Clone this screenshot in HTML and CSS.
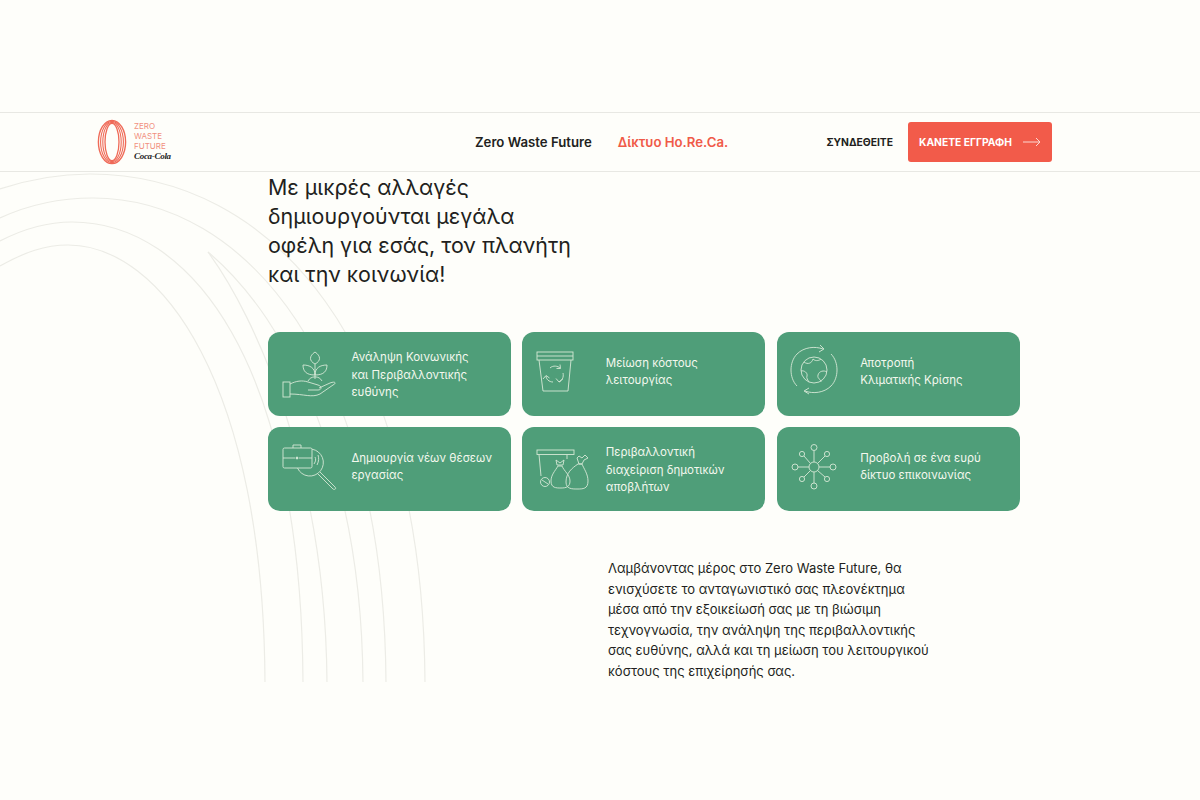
FILE: index.html
```html
<!DOCTYPE html>
<html lang="el">
<head>
  <meta charset="UTF-8">
  <title>Zero Waste Future</title>
  <link rel="stylesheet" href="styles.css">
</head>
<body>

  <header class="cabecera">
    <a class="logo" href="#">
      <svg class="logo-cero" width="30" height="46" viewBox="0 0 30 46" fill="none" stroke="#ef6a58">
        <ellipse cx="15" cy="23" rx="13.6" ry="21.6" stroke-width="1.4"/>
        <ellipse cx="15" cy="23" rx="11.4" ry="20.6" stroke-width="1.1"/>
        <ellipse cx="15" cy="23" rx="9.2" ry="19.6" stroke-width="1.1"/>
        <ellipse cx="15" cy="23" rx="7" ry="18.6" stroke-width="1.3"/>
      </svg>
      <span class="logo-texto">
        <span>ZERO</span>
        <span>WASTE</span>
        <span>FUTURE</span>
      </span>
      <span class="logo-coca">Coca-Cola</span>
    </a>

    <nav class="menu">
      <a href="#">Zero Waste Future</a>
      <a class="activo" href="#">Δίκτυο Ho.Re.Ca.</a>
    </nav>

    <a class="entrar" href="#">ΣΥΝΔΕΘΕΙΤΕ</a>
    <a class="boton" href="#">
      ΚΑΝΕΤΕ ΕΓΓΡΑΦΗ
      <svg width="18" height="10" viewBox="0 0 18 10" fill="none" stroke="#fbd9d2" stroke-width="1">
        <path d="M0 5H17M13 1l4 4-4 4"/>
      </svg>
    </a>
  </header>

  <main class="contenido">
    <!-- arcos decorativos del fondo -->
    <svg class="arcos" width="440" height="520" viewBox="0 172 440 520" fill="none" stroke="#ecece6" stroke-width="1.2">
      <path d="M0 188C30 178 60 173 90 173C270 173 425 340 425 688"/>
      <path d="M0 217C30 203 60 197 93 197C245 197 386 360 386 688"/>
      <path d="M0 240C25 227 48 221 72 221C190 221 303 360 303 688"/>
      <path d="M0 265C25 251 45 244 68 244C160 244 265 380 265 688"/>
      <path d="M208 251C290 320 363 470 363 688"/>
      <path d="M208 251C255 315 327 470 327 688"/>
    </svg>

    <h1>Με μικρές αλλαγές<br>δημιουργούνται μεγάλα<br>οφέλη για εσάς, τον πλανήτη<br>και την κοινωνία!</h1>

    <div class="tarjetas">
      <div class="tarjeta">
        <svg class="icono" viewBox="0 0 84 84">
          <rect x="15" y="50" width="7" height="15"/>
          <path d="M22 52C28 49 34 48 40 50L50 53C54 54 54 58 50 58L40 58M51 56L62 51C67 49 69 51 65 53L52 62C44 66 36 62 22 62"/>
          <path d="M47 47V32M47 32C41 29 41 24 47 20C53 24 53 29 47 32M47 43C38 43 35 39 35 33C42 33 47 36 47 43M47 43C56 43 59 39 59 33C52 33 47 36 47 43"/>
          <path d="M40 49a8 8 0 0 1 14 0"/>
        </svg>
        <p>Ανάληψη Κοινωνικής<br>και Περιβαλλοντικής<br>ευθύνης</p>
      </div>

      <div class="tarjeta">
        <svg class="icono" viewBox="0 0 84 84">
          <rect x="15" y="20" width="36" height="8"/>
          <path d="M15 24H51M17 28L21 59H46L49 28"/>
          <path d="M28 36C31 33 36 34 38 36M38 32.500L38.500 36.500L34.500 36.500M41 41C42 45 40 49 37 50M41 46.500L37 50L34 46.500M31 50C27 50 24 47 24 44M21 47L24 43.500L27.500 46"/>
        </svg>
        <p class="corto">Μείωση κόστους<br>λειτουργίας</p>
      </div>

      <div class="tarjeta">
        <svg class="icono" viewBox="0 0 84 84">
          <circle cx="37" cy="38" r="13"/>
          <path d="M27 30C31 33 35 31 36 27C39 30 43 28 44 27M50 40C47 38 42 39 41 43C40 47 44 47 44 50M24 39C27 38 31 41 30 44C29 46 31 48 32 50"/>
          <path d="M46 17C38 14 27 15 20 22C12 30 12 46 20 54M43 13L47 17L42 20"/>
          <path d="M28 59C36 62 47 61 54 54C62 46 62 30 54 22M32 56L27 59L32 62"/>
        </svg>
        <p class="corto">Αποτροπή<br>Κλιματικής Κρίσης</p>
      </div>

      <div class="tarjeta">
        <svg class="icono" viewBox="0 0 84 84">
          <path d="M44 22.200A13.500 13.500 0 1 1 29.500 41"/>
          <rect x="15" y="21" width="29" height="20" rx="1.500"/>
          <path d="M25 21V18H33V21M15 31H27M31 31H44"/>
          <circle cx="29" cy="31" r="1" class="relleno"/>
          <path d="M50 28C51 31 51 34 49 38M47 30C48 32 48 34 46 37"/>
          <path d="M52 45L67 60C69 62 66 63 65 62L50 47"/>
        </svg>
        <p class="corto">Δημιουργία νέων θέσεων<br>εργασίας</p>
      </div>

      <div class="tarjeta">
        <svg class="icono" viewBox="0 0 84 84">
          <rect x="15" y="23" width="37" height="4.500"/>
          <path d="M17 27.500L19 49M45 27.500V32"/>
          <circle cx="23" cy="55" r="4.500"/>
          <path d="M20 53L26 57"/>
          <path d="M36 39C33 44 29 48 29 54C29 61 34 61 39 61C44 61 48 60 48 54C48 48 42 44 40 39M36 39H40M34 33L38 36L42 33L41 38H35Z"/>
          <path d="M56 37C50 41 44 46 44 55C44 62 50 62 55 62C61 62 66 62 66 54C66 47 62 42 60 37M56 37H60M55 31L57 29L60 31L63 28L66 31L62 33L60 37H57Z"/>
        </svg>
        <p>Περιβαλλοντική<br>διαχείριση δημοτικών<br>αποβλήτων</p>
      </div>

      <div class="tarjeta">
        <svg class="icono" viewBox="0 0 84 84">
          <circle cx="37" cy="40" r="5"/>
          <circle cx="37" cy="20.500" r="3"/>
          <circle cx="37" cy="59" r="3"/>
          <circle cx="18" cy="40" r="3"/>
          <circle cx="56" cy="40" r="3"/>
          <circle cx="25" cy="27" r="2.600"/>
          <circle cx="50" cy="27" r="2.600"/>
          <circle cx="25" cy="52" r="2.600"/>
          <circle cx="50" cy="52" r="2.600"/>
          <path d="M37 23.500V35M37 45V56M21 40H32M42 40H53M27 29L33.500 36.500M48 29L40.500 36.500M27 50L33.500 43.500M48 50L40.500 43.500"/>
        </svg>
        <p class="corto">Προβολή σε ένα ευρύ<br>δίκτυο επικοινωνίας</p>
      </div>
    </div>

    <p class="texto">Λαμβάνοντας μέρος στο Zero Waste Future, θα<br>ενισχύσετε το ανταγωνιστικό σας πλεονέκτημα<br>μέσα από την εξοικείωσή σας με τη βιώσιμη<br>τεχνογνωσία, την ανάληψη της περιβαλλοντικής<br>σας ευθύνης, αλλά και τη μείωση του λειτουργικού<br>κόστους της επιχείρησής σας.</p>
  </main>

</body>
</html>
```

FILE: styles.css
```css
body {
  margin: 0;
  padding-top: 112px;
  font-family: Inter, "Noto Sans", sans-serif;
  background-color: #fefefa;
  color: #221f20;
}

a {
  text-decoration: none;
  color: inherit;
}

.cabecera {
  display: flex;
  align-items: center;
  height: 58px;
  padding: 0 148px 0 98px;
  border-top: 1px solid #e8e8e3;
  border-bottom: 1px solid #e8e8e3;
}

.logo {
  position: relative;
  display: flex;
  align-items: flex-start;
  width: 377px;
}

.logo-cero {
  display: block;
  margin-left: -1px;
}

.logo-texto {
  display: flex;
  flex-direction: column;
  margin: 2px 0 0 7px;
  font-size: 8px;
  line-height: 10px;
  color: #f1907f;
}

.logo-coca {
  position: absolute;
  left: 36px;
  top: 32px;
  font-family: "Liberation Serif", serif;
  font-style: italic;
  font-weight: bold;
  font-size: 9px;
  letter-spacing: -0.3px;
  color: #222;
}

.menu {
  display: flex;
  gap: 26px;
  font-size: 13.200px;
  font-weight: 600;
}

.menu .activo {
  color: #f05a48;
}

.entrar {
  margin-left: auto;
  font-size: 10.300px;
  font-weight: 700;
}

.boton {
  display: flex;
  align-items: center;
  justify-content: space-between;
  width: 144px;
  height: 40px;
  box-sizing: border-box;
  margin-left: 15px;
  padding: 0 11px;
  background-color: #f25b4a;
  border-radius: 3px;
  color: #fff;
  font-size: 10.300px;
  font-weight: 700;
}

.contenido {
  position: relative;
  padding-left: 268px;
}

.arcos {
  position: absolute;
  left: 0;
  top: 0;
}

h1 {
  position: relative;
  margin: 1px 0 0;
  font-size: 21.400px;
  line-height: 29px;
  font-weight: 400;
}

.tarjetas {
  position: relative;
  display: grid;
  grid-template-columns: repeat(3, 243px);
  grid-auto-rows: 84px;
  gap: 11px 11.400px;
  margin-top: 43px;
}

.tarjeta {
  display: flex;
  align-items: center;
  background-color: #4f9e79;
  border-radius: 12px;
  color: #f4f8ee;
}

.tarjeta p {
  margin: 3px 0 0 -0.600px;
  font-size: 11.500px;
  line-height: 17.500px;
}

.tarjeta .corto {
  margin-top: 0;
  margin-bottom: 4px;
}

.icono {
  flex: none;
  width: 84px;
  height: 84px;
  fill: none;
  stroke: #d6e8d6;
  stroke-width: 0.9;
}

.icono .relleno {
  fill: #eef6ea;
}

.texto {
  position: relative;
  margin: 47px 0 0 340px;
  font-size: 13px;
  line-height: 20.600px;
}
```
